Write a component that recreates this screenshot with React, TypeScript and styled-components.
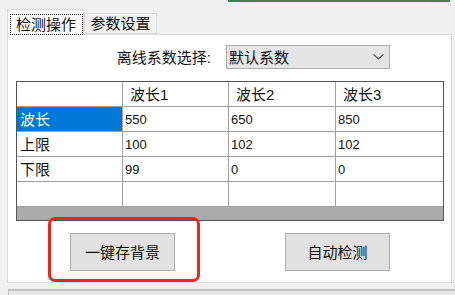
import React from "react";
import styled, { createGlobalStyle } from "styled-components";

const GlobalStyle = createGlobalStyle`
  html, body {
    margin: 0;
    padding: 0;
    background: #f0f0f0;
  }
  body {
    font-family: "Liberation Sans", "Noto Sans CJK SC", sans-serif;
    color: #000;
  }
`;

const Page = styled.div`
  position: relative;
  width: 455px;
  height: 295px;
  overflow: hidden;
  background: #f0f0f0;
  display: flex;
  flex-direction: column;
`;

const TopRule = styled.div`
  flex-shrink: 0;
  margin-left: 228px;
  width: 222px;
  height: 2px;
  background: #2f8a55;
`;

const TabStrip = styled.div`
  flex-shrink: 0;
  display: flex;
  align-items: flex-end;
  height: 32px;
  padding-left: 7px;
`;

const Tab = styled.div<{ $active?: boolean }>`
  position: relative;
  z-index: ${(p) => (p.$active ? 1 : 0)};
  box-sizing: border-box;
  width: ${(p) => (p.$active ? 77 : 73)}px;
  height: ${(p) => (p.$active ? 26 : 21)}px;
  margin-bottom: ${(p) => (p.$active ? -1 : 0)}px;
  display: flex;
  align-items: center;
  justify-content: center;
  background: ${(p) => (p.$active ? "#fff" : "#f0f0f0")};
  border: 1px solid #d9d9d9;
  border-bottom: ${(p) => (p.$active ? "none" : "1px solid #d9d9d9")};
  font-size: 15px;
  line-height: 1;
  color: #111;
`;

const FocusBox = styled.span`
  box-sizing: border-box;
  width: 73px;
  height: 21px;
  margin-top: 3px;
  margin-left: 1px;
  display: flex;
  align-items: center;
  justify-content: center;
  border: 1px dotted #222;
`;

const Panel = styled.div`
  flex-shrink: 0;
  box-sizing: border-box;
  margin-left: 7px;
  width: 445px;
  height: 249px;
  background: #fff;
  border: 1px solid #d9d9d9;
  display: flex;
  flex-direction: column;
`;

const ComboRow = styled.div`
  margin-top: 10px;
  height: 24px;
  display: flex;
  align-items: center;
  justify-content: flex-end;
  gap: 15px;
  padding-right: 61px;
`;

const Label = styled.span`
  font-size: 15px;
  line-height: 1;
  color: #111;
`;

const Combo = styled.div`
  box-sizing: border-box;
  width: 164px;
  height: 24px;
  display: flex;
  align-items: center;
  justify-content: space-between;
  padding: 0 5px 0 2px;
  background: #e5e5e5;
  border: 1px solid #adadad;
  font-size: 15px;
  line-height: 1;
  color: #111;
`;

const Grid = styled.div`
  box-sizing: border-box;
  margin: 12px 7px 0 8px;
  height: 140px;
  border: 1px solid #555;
  background: #ababab;
  display: grid;
  grid-template-columns: 106px 106px 107px 107px;
  grid-auto-rows: 25px;
  align-content: start;
`;

type CellKind = "corner" | "colHead" | "rowHead" | "value";

const Cell = styled.div<{ $kind: CellKind; $selected?: boolean; $last?: boolean }>`
  box-sizing: border-box;
  display: flex;
  align-items: center;
  padding-left: ${(p) =>
    p.$kind === "colHead" ? 7 : p.$kind === "rowHead" ? 3 : 2}px;
  background: ${(p) => (p.$selected ? "#0078d7" : "#fff")};
  color: ${(p) => (p.$selected ? "#fff" : "#111")};
  border-right: ${(p) => (p.$last ? "none" : "1px solid #a0a0a0")};
  border-bottom: 1px solid #a0a0a0;
  font-size: ${(p) => (p.$kind === "value" ? 13 : 15)}px;
  line-height: 1;
`;

const ButtonRow = styled.div`
  margin-top: 12px;
  display: flex;
  justify-content: space-between;
  padding: 0 61px 0 62px;
`;

const Button = styled.button`
  box-sizing: border-box;
  width: 105px;
  height: 38px;
  padding: 0;
  background: #e1e1e1;
  border: 1px solid #adadad;
  font-family: "Liberation Sans", "Noto Sans CJK SC", sans-serif;
  font-size: 15px;
  line-height: 1;
  color: #111;
`;

const BottomStrip = styled.div`
  flex-shrink: 0;
  box-sizing: border-box;
  margin-top: 6px;
  margin-left: 8px;
  height: 6px;
  background: #e8e8e8;
  border-top: 2px solid #c2c2c2;
  border-left: 1px solid #c2c2c2;
`;

const Highlight = styled.div`
  position: absolute;
  left: 48px;
  top: 217px;
  width: 152px;
  height: 65px;
  box-sizing: border-box;
  border: 3px solid #f2231b;
  border-radius: 7px;
  pointer-events: none;
`;

const columns = ["波长1", "波长2", "波长3"];

const rows: { name: string; values: string[] }[] = [
  { name: "波长", values: ["550", "650", "850"] },
  { name: "上限", values: ["100", "102", "102"] },
  { name: "下限", values: ["99", "0", "0"] },
  { name: "", values: ["", "", ""] },
];

const Chevron = () => (
  <svg width="11" height="6" viewBox="0 0 11 6">
    <polyline points="0.5,0.5 5.5,5 10.5,0.5" fill="none" stroke="#555" strokeWidth="1.1" />
  </svg>
);

const App: React.FC = () => {
  return (
    <Page>
      <GlobalStyle />
      <TopRule />
      <TabStrip>
        <Tab $active>
          <FocusBox>检测操作</FocusBox>
        </Tab>
        <Tab>参数设置</Tab>
      </TabStrip>
      <Panel>
        <ComboRow>
          <Label>离线系数选择:</Label>
          <Combo>
            <span>默认系数</span>
            <Chevron />
          </Combo>
        </ComboRow>
        <Grid>
          <Cell $kind="corner" />
          {columns.map((c, i) => (
            <Cell key={c} $kind="colHead" $last={i === columns.length - 1}>
              {c}
            </Cell>
          ))}
          {rows.map((r, ri) => (
            <React.Fragment key={ri}>
              <Cell $kind="rowHead" $selected={ri === 0}>
                {r.name}
              </Cell>
              {r.values.map((v, vi) => (
                <Cell key={vi} $kind="value" $last={vi === r.values.length - 1}>
                  {v}
                </Cell>
              ))}
            </React.Fragment>
          ))}
        </Grid>
        <ButtonRow>
          <Button>一键存背景</Button>
          <Button>自动检测</Button>
        </ButtonRow>
      </Panel>
      <BottomStrip />
      <Highlight />
    </Page>
  );
};

export default App;
